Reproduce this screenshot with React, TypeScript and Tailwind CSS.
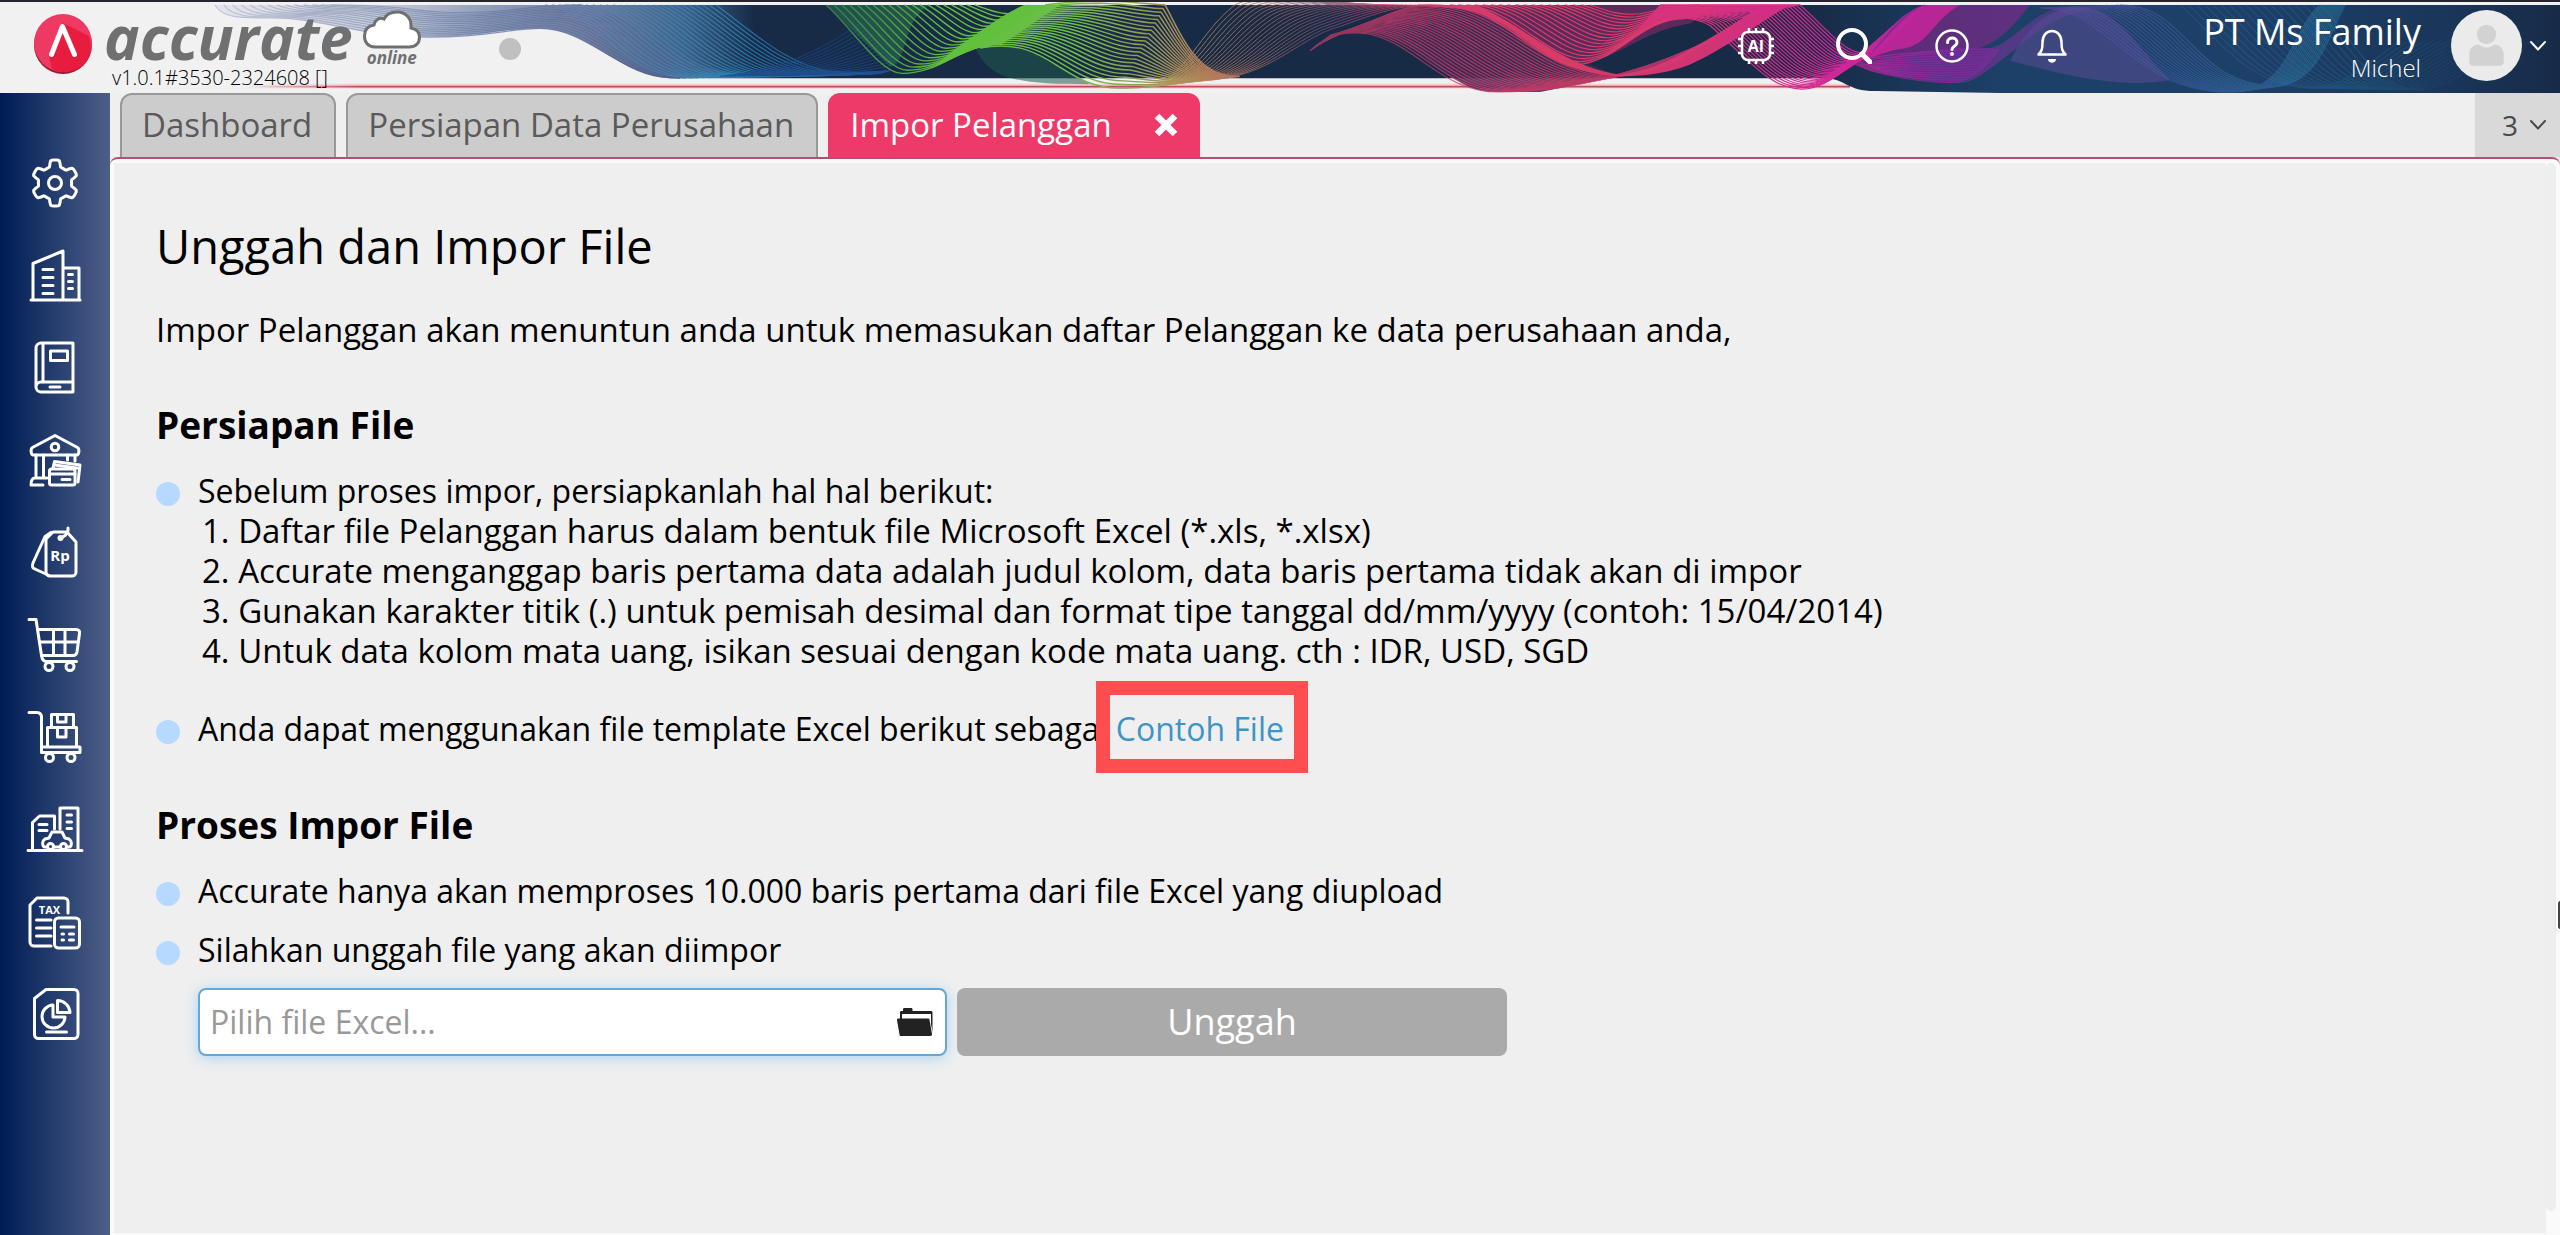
import { useState, type ReactNode } from "react";

type Curve = number[];

interface RibbonProps {
    from: Curve;
    to: Curve;
    lines: number;
    stroke: string;
    width?: number;
    opacity?: number;
}

// a curve is: x y (start), then groups of six numbers for each cubic segment
function toPath(c: Curve) {
    let d = `M${c[0]} ${c[1]}`;
    for (let i = 2; i < c.length; i += 6) {
        d += `C${c.slice(i, i + 6).join(" ")}`;
    }
    return d;
}

function Ribbon({ from, to, lines, stroke, width = 1.2, opacity = 1 }: RibbonProps) {
    return (
        <g fill="none" stroke={stroke} strokeWidth={width} opacity={opacity}>
            {Array.from({ length: lines }, (_, i) => {
                const t = i / (lines - 1);
                return <path key={i} d={toPath(from.map((v, k) => v + (to[k] - v) * t))} />;
            })}
        </g>
    );
}

function Banner() {
    return (
        <svg
            className="absolute inset-0 h-full w-full"
            viewBox="0 0 2560 93"
            preserveAspectRatio="none"
            aria-hidden="true"
        >
            <defs>
                <linearGradient id="base" gradientUnits="userSpaceOnUse" x1="215" y1="0" x2="2560" y2="0">
                    <stop offset="0" stopColor="#e4e5ec" />
                    <stop offset="0.07" stopColor="#c9ccdb" />
                    <stop offset="0.12" stopColor="#8b9ab8" />
                    <stop offset="0.16" stopColor="#6f7d9f" />
                    <stop offset="0.2" stopColor="#3f638c" />
                    <stop offset="0.23" stopColor="#172b47" />
                    <stop offset="0.68" stopColor="#172b47" />
                    <stop offset="0.76" stopColor="#1c4068" />
                    <stop offset="0.86" stopColor="#1d4069" />
                    <stop offset="0.95" stopColor="#1a365a" />
                    <stop offset="1" stopColor="#172b47" />
                </linearGradient>
                <linearGradient id="rule" gradientUnits="userSpaceOnUse" x1="245" y1="0" x2="360" y2="0">
                    <stop offset="0" stopColor="#c14c5c" stopOpacity="0" />
                    <stop offset="1" stopColor="#c14c5c" />
                </linearGradient>
                <linearGradient id="halo" gradientUnits="userSpaceOnUse" x1="245" y1="0" x2="360" y2="0">
                    <stop offset="0" stopColor="#fbc9cf" stopOpacity="0" />
                    <stop offset="1" stopColor="#fbc9cf" />
                </linearGradient>
                <linearGradient id="haze" gradientUnits="userSpaceOnUse" x1="220" y1="0" x2="660" y2="0">
                    <stop offset="0" stopColor="#b9bfd2" />
                    <stop offset="0.6" stopColor="#6a7da6" />
                    <stop offset="1" stopColor="#56618f" />
                </linearGradient>
                <linearGradient id="azure" gradientUnits="userSpaceOnUse" x1="560" y1="0" x2="900" y2="0">
                    <stop offset="0" stopColor="#6c84a8" />
                    <stop offset="0.5" stopColor="#2a86b8" />
                    <stop offset="1" stopColor="#1c4c9c" />
                </linearGradient>
                <linearGradient id="lime" gradientUnits="userSpaceOnUse" x1="820" y1="0" x2="1240" y2="0">
                    <stop offset="0" stopColor="#2f7a50" />
                    <stop offset="0.3" stopColor="#62c03c" />
                    <stop offset="0.6" stopColor="#6fbe4c" />
                    <stop offset="0.85" stopColor="#a58a5a" />
                    <stop offset="1" stopColor="#c2665a" />
                </linearGradient>
                <linearGradient id="amber" gradientUnits="userSpaceOnUse" x1="1160" y1="0" x2="1400" y2="0">
                    <stop offset="0" stopColor="#b5a05a" />
                    <stop offset="0.35" stopColor="#b0705c" />
                    <stop offset="0.7" stopColor="#7a4c66" />
                    <stop offset="1" stopColor="#c83d68" />
                </linearGradient>
                <linearGradient id="rose" gradientUnits="userSpaceOnUse" x1="1300" y1="0" x2="1760" y2="0">
                    <stop offset="0" stopColor="#b33a62" />
                    <stop offset="0.35" stopColor="#d83a6c" />
                    <stop offset="0.6" stopColor="#de3b66" />
                    <stop offset="1" stopColor="#d8327c" />
                </linearGradient>
                <linearGradient id="magenta" gradientUnits="userSpaceOnUse" x1="1700" y1="0" x2="2060" y2="0">
                    <stop offset="0" stopColor="#d8327c" />
                    <stop offset="0.4" stopColor="#d3259a" />
                    <stop offset="0.7" stopColor="#8a2a9c" />
                    <stop offset="1" stopColor="#54408f" />
                </linearGradient>
                <linearGradient id="violet" gradientUnits="userSpaceOnUse" x1="1980" y1="0" x2="2480" y2="0">
                    <stop offset="0" stopColor="#7a3f9c" />
                    <stop offset="0.4" stopColor="#3c62a4" />
                    <stop offset="0.75" stopColor="#26789a" />
                    <stop offset="1" stopColor="#1c4068" />
                </linearGradient>
            </defs>

            <path d="M245 86H1850" stroke="url(#halo)" strokeWidth="5" />
            <path d="M245 86.5H1850" stroke="url(#rule)" strokeWidth="2" />

            <path
                fill="url(#base)"
                d="M215 3C225 22 260 14 290 17C340 22 370 36 430 36C480 36 500 27 540 27C590 27 620 78 672 78H1820C1845 76 1845 91 1875 91L2000 93H2560V3Z"
            />

            {/* left haze */}
            <Ribbon
                from={[215, 3, 225, 22, 260, 14, 290, 17, 340, 22, 370, 36, 430, 36, 490, 36, 510, 27, 540, 27, 590, 27, 620, 78, 680, 78]}
                to={[330, 3, 360, 3, 380, 4, 400, 6, 430, 10, 450, 12, 490, 10, 520, 8, 540, 3, 580, 3, 640, 10, 660, 74, 760, 76]}
                lines={14}
                stroke="url(#haze)"
                opacity={0.8}
            />
            <Ribbon
                from={[545, 3, 600, 10, 620, 78, 690, 77, 760, 77, 820, 76, 880, 73]}
                to={[716, 3, 750, 28, 790, 68, 835, 71, 850, 72, 870, 73, 890, 70]}
                lines={26}
                stroke="url(#azure)"
                opacity={0.85}
            />
            <Ribbon
                from={[720, 76, 780, 70, 820, 50, 860, 22]}
                to={[780, 75, 830, 74, 870, 72, 900, 62]}
                lines={14}
                stroke="#1d4784"
                width={1}
                opacity={0.8}
            />

            {/* green */}
            <path fill="#2f7a50" opacity="0.5" d="M826 3L890 66C910 60 900 20 930 3Z" />
            <Ribbon
                from={[826, 3, 850, 24, 880, 73, 902, 73, 940, 73, 960, 45, 990, 45]}
                to={[975, 3, 990, 9, 1000, 12, 1008, 12, 1015, 12, 1022, 8, 1028, 3]}
                lines={20}
                stroke="url(#lime)"
                width={1.4}
            />
            <path
                fill="#62c03c"
                d="M950 52C975 34 1000 14 1024 3H1060C1040 16 1020 32 1000 44C985 42 965 52 935 66Z"
            />
            <path fill="#1f5a4a" opacity="0.55" d="M976 48C990 80 1020 84 1090 84C1060 66 1030 44 995 45Z" />
            <Ribbon
                from={[980, 47, 1050, 34, 1060, 88, 1120, 88, 1150, 88, 1170, 84, 1200, 80]}
                to={[1045, 3, 1110, -6, 1145, 3, 1165, 3, 1180, 30, 1195, 78, 1240, 76]}
                lines={24}
                stroke="url(#lime)"
                width={1.5}
            />

            {/* amber */}
            <Ribbon
                from={[1150, 87, 1185, 78, 1200, 30, 1235, 3, 1250, -6, 1300, -8, 1330, 3]}
                to={[1205, 80, 1270, 78, 1300, 35, 1340, 25, 1370, 14, 1390, 6, 1420, 3]}
                lines={22}
                stroke="url(#amber)"
                width={1}
                opacity={0.8}
            />

            {/* rose */}
            <path fill="#3a2c54" opacity="0.9" d="M1370 30C1400 10 1440 3 1480 3L1580 60L1620 76L1540 92H1490C1450 90 1420 40 1370 30Z" />
            <path fill="#5a2a5a" d="M1470 3H1720L1690 22C1640 30 1620 58 1578 64Z" />
            <Ribbon
                from={[1310, 50, 1330, 30, 1350, 30, 1370, 33, 1420, 45, 1440, 92, 1500, 92, 1560, 92, 1590, 80, 1640, 72]}
                to={[1330, 34, 1380, 20, 1390, 8, 1420, 3, 1500, -4, 1540, 70, 1610, 75, 1650, 76, 1680, 60, 1720, 34]}
                lines={26}
                stroke="url(#rose)"
                opacity={0.75}
            />
            <Ribbon
                from={[1450, 3, 1500, 6, 1540, 66, 1578, 64, 1620, 60, 1640, 17, 1685, 17]}
                to={[1590, 3, 1610, 10, 1620, 14, 1640, 12, 1660, 8, 1680, 3, 1700, 3]}
                lines={18}
                stroke="url(#rose)"
            />
            <path
                fill="url(#rose)"
                opacity="0.95"
                d="M1400 3H1475C1520 20 1560 66 1620 74C1660 70 1690 48 1722 30C1740 18 1755 8 1765 3H1790C1760 20 1730 45 1690 64C1650 80 1600 80 1560 62C1520 40 1500 10 1450 6Z"
            />
            <Ribbon
                from={[1640, 26, 1660, 14, 1690, 12, 1710, 24, 1750, 60, 1770, 89, 1802, 89, 1830, 89, 1850, 60, 1880, 50]}
                to={[1660, 3, 1720, 3, 1780, 3, 1800, 3, 1830, 30, 1850, 60, 1870, 50, 1890, 30, 1900, 12, 1925, 3]}
                lines={28}
                stroke="url(#magenta)"
            />

            {/* magenta */}
            <path fill="#7a2a88" opacity="0.7" d="M1865 60C1890 30 1900 10 1930 3H2030C2010 30 1990 50 1960 50Z" />
            <path fill="#c8259a" opacity="0.85" d="M1862 62C1890 36 1900 15 1925 3H1960C1930 20 1930 45 1900 48C1890 50 1875 54 1862 62Z" />
            <path fill="#7a2a9c" opacity="0.75" d="M1865 64C1900 50 1960 44 2000 48C1985 70 1970 83 1950 83C1915 80 1885 76 1865 64Z" />
            <Ribbon
                from={[1850, 62, 1890, 50, 1960, 50, 1990, 48, 2020, 40, 2030, 6, 2075, 5]}
                to={[1870, 70, 1920, 84, 1960, 84, 1970, 80, 2010, 60, 2040, 12, 2090, 8]}
                lines={14}
                stroke="url(#magenta)"
                opacity={0.7}
            />

            {/* violet and teal */}
            <path fill="#5b4a94" opacity="0.55" d="M2010 60C2030 20 2050 5 2085 6C2120 10 2140 50 2170 80C2110 90 2050 70 2010 60Z" />
            <Ribbon
                from={[2040, 6, 2110, 6, 2130, 92, 2230, 92, 2290, 92, 2290, 30, 2320, 3]}
                to={[2120, 3, 2190, 3, 2190, 86, 2280, 86, 2320, 80, 2330, 30, 2345, 3]}
                lines={18}
                stroke="url(#violet)"
                opacity={0.6}
            />
            <Ribbon
                from={[2180, 3, 2220, 40, 2250, 86, 2310, 88, 2350, 86, 2370, 60, 2400, 40]}
                to={[2320, 3, 2350, 30, 2370, 88, 2420, 90, 2460, 86, 2480, 50, 2540, 40]}
                lines={18}
                stroke="url(#violet)"
                opacity={0.35}
            />
        </svg>
    );
}

function gearPath() {
    const pts = Array.from({ length: 96 }, (_, i) => {
        const a = (i / 96) * Math.PI * 2;
        const wave = Math.max(-1, Math.min(1, 1.7 * Math.cos(6 * a)));
        const r = 19.8 + 3.2 * Math.sin((wave * Math.PI) / 2);
        return `${(26 + r * Math.sin(a)).toFixed(2)} ${(26 - r * Math.cos(a)).toFixed(2)}`;
    });
    return `M${pts.join("L")}Z`;
}

const menu: { label: string; icon: ReactNode }[] = [
    {
        label: "Pengaturan",
        icon: (
            <>
                <path d={gearPath()} />
                <circle cx="26" cy="26" r="6.5" />
            </>
        ),
    },
    {
        label: "Perusahaan",
        icon: (
            <>
                <path d="M2 51h49M4 51V14.500L34 2v49M34 19h16v32" />
                <path d="M14 20.500h10M14 28.500h10M14 36.500h10M14 44.500h10M39.500 25.500h4M39.500 32.500h4M39.500 39.500h4" />
            </>
        ),
    },
    {
        label: "Buku Besar",
        icon: (
            <>
                <path d="M44 2H12a5 5 0 0 0-5 5v39a5 5 0 0 0 5 5h32zM14 2v39M44 41H12a5 5 0 0 0-5 5" />
                <path d="M21.500 10h17v9.500h-17zM21 46h10" />
            </>
        ),
    },
    {
        label: "Kas dan Bank",
        icon: (
            <>
                <path d="M26 2.500L3.500 14.500c-2 1-2 7.500 1 7.500h43c3 0 3-6.500 1-7.500z" />
                <circle cx="26" cy="14" r="3.800" />
                <path d="M7 22v21M14.500 22v21M38.500 22v5M46 22v6M18 45H6c-3 0-4 3-4 7h12" />
                <path d="M24 35l1.500-6.500L51 32l-2 17" />
                <rect x="20.500" y="36" width="25.500" height="16" rx="2" />
                <path d="M20.500 41h25.500M33 46.500h8M26 32l22 3" />
            </>
        ),
    },
    {
        label: "Penjualan",
        icon: (
            <>
                <path d="M24 7h14l9 10v30a4 4 0 0 1-4 4H21a4 4 0 0 1-4-4V14z" />
                <path d="M22 7.500l-6 4L4 38c-1 3-1 5 2 6l14 6.500" />
                <path d="M39 3v2c0 5-4 6-7 8" />
                <circle cx="31.500" cy="13" r="1.500" />
                <text
                    x="31"
                    y="36"
                    fontSize="15"
                    fontWeight="700"
                    textAnchor="middle"
                    fill="white"
                    stroke="none"
                    fontFamily="'Open Sans', sans-serif"
                >
                    Rp
                </text>
            </>
        ),
    },
    {
        label: "Pembelian",
        icon: (
            <>
                <path d="M0 2.500h7l5.500 36c.5 4 2 6 5 6h30" />
                <path d="M9 12.500h38c3 0 4 2 3.500 4L48 35c-.5 3-2 3.500-4 3.500H13M10.500 25h39M24.500 12.500v26M36 12.500v26" />
                <circle cx="20" cy="49.500" r="4" />
                <circle cx="41" cy="49.500" r="4" />
            </>
        ),
    },
    {
        label: "Persediaan",
        icon: (
            <>
                <path d="M0 3.500h8c3 0 4.500 2 4.500 5v35h38.500v-5.500H12.500" />
                <path d="M22.500 18.500v-13h22v13M28.500 5.500v7.500h8.500V5.500M18.500 37.500v-19h29v19M28.500 18.500V28h8.500v-9.500" />
                <circle cx="20.500" cy="48.500" r="4" />
                <circle cx="42" cy="48.500" r="4" />
            </>
        ),
    },
    {
        label: "Aset Tetap",
        icon: (
            <>
                <path d="M-1 49.500h54M3.500 49.500v-28l7-6.500H25.500v13M31 28V7h18v42.500" />
                <path d="M10 23.500h8M10 29.500h8M38 14h4.500M38 21h4.500M38 27.500h4.500" />
                <path d="M18 46h-3c-2-2-2-6 1-8l4-1 3-6h10l3 6 4 1c3 2 3 6 1 8h-3M25 46h6" />
                <circle cx="21.500" cy="45.500" r="3" />
                <circle cx="34.500" cy="45.500" r="3" />
            </>
        ),
    },
    {
        label: "Pajak",
        icon: (
            <>
                <path d="M39 20V9a4 4 0 0 0-4-4H8l-7 7v37a4 4 0 0 0 4 4h17" />
                <path d="M7.500 27H22M7.500 35H22M7.500 43H22" />
                <rect x="25.500" y="25" width="25" height="30" rx="4" />
                <path d="M32 34h13M33 41h1.500M40.500 41h4M33 47h1.500M40.500 47h4" />
                <text
                    x="20.500"
                    y="21"
                    fontSize="11"
                    fontWeight="700"
                    textAnchor="middle"
                    fill="white"
                    stroke="none"
                    fontFamily="'Open Sans', sans-serif"
                >
                    TAX
                </text>
            </>
        ),
    },
    {
        label: "Laporan",
        icon: (
            <>
                <path d="M17 4.500h28a4 4 0 0 1 4 4v41a4 4 0 0 1-4 4H9.500a4 4 0 0 1-4-4V13.500z" />
                <path d="M24 20a11.500 11.500 0 1 0 12 12H24z" />
                <path d="M28.500 15.500v12h12.500a12.500 12.500 0 0 0-12.500-12zM17.500 47h20" />
            </>
        ),
    },
];

function Sidebar() {
    return (
        <nav
            aria-label="Menu utama"
            className="flex w-[110px] shrink-0 flex-col bg-linear-to-r from-[#001b54] to-[#4d5f88] pt-11"
        >
            {menu.map((item) => (
                <button
                    key={item.label}
                    aria-label={item.label}
                    className="flex h-[92px] w-full items-center justify-center"
                >
                    <svg
                        className="h-[52px] w-[52px] overflow-visible"
                        viewBox="0 0 52 52"
                        fill="none"
                        stroke="white"
                        strokeWidth="3"
                        strokeLinecap="round"
                        strokeLinejoin="round"
                    >
                        {item.icon}
                    </svg>
                </button>
            ))}
        </nav>
    );
}

function Logo() {
    return (
        <div className="flex flex-col pt-2 pl-[34px]">
            <div className="flex h-[60px]">
                <svg className="mt-1 h-[60px] w-[58px] shrink-0" viewBox="0 0 58 60" aria-hidden="true">
                    <ellipse cx="29" cy="31" rx="29" ry="29" fill="#9c1c34" />
                    <ellipse cx="29" cy="29" rx="29" ry="29" fill="#ee3a63" />
                    <path d="M29 9L55 22C62 42 50 58 29 58C26 58 22 57 18 55L15 42Z" fill="#e81c3e" />
                    <path
                        d="M17.500 40.500L28.500 12.500L40.500 40.500"
                        fill="none"
                        stroke="white"
                        strokeWidth="5"
                        strokeLinecap="round"
                        strokeLinejoin="round"
                    />
                </svg>
                <span className="ml-3 text-[60px] leading-[54px] font-bold text-[#6f7072] italic">
                    accurate
                </span>
                <div className="ml-2.5 flex flex-col items-center">
                    <svg className="h-10 w-[58px]" viewBox="0 0 58 40" aria-hidden="true">
                        <path
                            d="M12 37C5 37 1.500 32 1.500 26C1.500 20 5 16 11 15C12 10 16 7 21 9C24 3 30 1.500 36 2C43 3 48 8 48 15V18C53 19 56.500 22 56.500 27C56.500 33 53 37 46 37Z"
                            fill="white"
                            stroke="#6f7072"
                            strokeWidth="3"
                        />
                    </svg>
                    <span className="text-[17px] leading-4 font-bold text-[#6f7072] italic">online</span>
                </div>
            </div>
            <span className="pl-[78px] text-[20px] leading-4 font-light text-black">
                v1.0.1#3530-2324608 []
            </span>
        </div>
    );
}

function Chevron() {
    return (
        <svg className="h-[10px] w-4" viewBox="0 0 16 10" fill="none" stroke="currentColor" strokeWidth="2">
            <path d="M1 1l7 7.500L15 1" strokeLinecap="round" strokeLinejoin="round" />
        </svg>
    );
}

function Header() {
    return (
        <header className="relative h-[93px] border-t-2 border-[#26242c] bg-[#f1f1f1]">
            <Banner />
            <div className="relative flex h-full items-start justify-between">
                <div className="flex items-start">
                    <Logo />
                    <span className="mt-[36px] ml-[78px] h-[22px] w-[22px] rounded-full bg-[#c0c0c0]" />
                </div>

                <div className="flex items-start pr-3.5 text-white">
                    <div className="flex pt-[26px]">
                        <button aria-label="Asisten AI" className="mr-[62px]">
                            <svg className="h-9 w-9" viewBox="0 0 36 36" fill="none" stroke="white" strokeWidth="2.500">
                                <rect x="4" y="4" width="28" height="28" rx="6" />
                                <path
                                    d="M11 4V0M18 4V0M25 4V0M11 36v-4M18 36v-4M25 36v-4M4 11H0M4 18H0M4 25H0M36 11h-4M36 18h-4M36 25h-4"
                                />
                                <text
                                    x="18"
                                    y="24"
                                    fontSize="16"
                                    fontWeight="700"
                                    textAnchor="middle"
                                    fill="white"
                                    stroke="none"
                                    fontFamily="'Open Sans', sans-serif"
                                >
                                    AI
                                </text>
                            </svg>
                        </button>
                        <button aria-label="Cari" className="mr-[62px]">
                            <svg className="h-9 w-9" viewBox="0 0 36 36" fill="none" stroke="white" strokeWidth="4">
                                <circle cx="16" cy="16" r="14" />
                                <path d="M26 26l8 8" strokeWidth="5" strokeLinecap="round" />
                            </svg>
                        </button>
                        <button aria-label="Bantuan" className="mr-[64px]">
                            <svg className="h-9 w-9" viewBox="0 0 36 36" fill="none" stroke="white" strokeWidth="2.500">
                                <circle cx="18" cy="18" r="15.500" />
                                <path
                                    d="M13.500 14.500c0-6 9.500-6 9.500 0 0 4-5 3.500-5 7"
                                    strokeWidth="3"
                                    strokeLinecap="round"
                                />
                                <circle cx="18" cy="26" r="2" fill="white" stroke="none" />
                            </svg>
                        </button>
                        <button aria-label="Notifikasi">
                            <svg className="h-9 w-9" viewBox="0 0 36 36" fill="none" stroke="white" strokeWidth="2.500">
                                <path
                                    d="M4.500 26.500c3-3 4-5 4-12 0-7 4-11.500 9.500-11.500s9.500 4.500 9.500 11.500c0 7 1 9 4 12z"
                                    strokeLinejoin="round"
                                />
                                <path d="M14 31h8c0 5-8 5-8 0z" fill="white" stroke="none" />
                            </svg>
                        </button>
                    </div>

                    <div className="ml-[133px] flex flex-col items-end pt-1.5">
                        <span className="text-[36px] leading-[48px]">PT Ms Family</span>
                        <span className="text-[24px] leading-6 font-light">Michel</span>
                    </div>
                    <button aria-label="Akun" className="ml-[30px] flex items-center gap-2 pt-2">
                        <svg className="h-[71px] w-[71px]" viewBox="0 0 70 70" aria-hidden="true">
                            <circle cx="35" cy="35" r="35" fill="#ebebeb" />
                            <circle cx="35" cy="24" r="9.500" fill="#d2d2d2" />
                            <path
                                d="M18 51V45C18 38 22 34 27 34C32 38 38 38 43 34C48 34 52 38 52 45V51C52 53 51 55 48 55H22C19 55 18 53 18 51Z"
                                fill="#d2d2d2"
                            />
                        </svg>
                        <Chevron />
                    </button>
                </div>
            </div>
        </header>
    );
}

function TabBar() {
    return (
        <div className="flex h-16 justify-between bg-[#efefef]">
            <div role="tablist" className="flex gap-[10px] pl-[10px] text-[33px] text-[#5a5a5a]">
                <button
                    role="tab"
                    aria-selected="false"
                    className="rounded-t-xl border-2 border-b-0 border-[#999] bg-[#ccc] pr-[22px] pb-0.5 pl-5"
                >
                    Dashboard
                </button>
                <button
                    role="tab"
                    aria-selected="false"
                    className="rounded-t-xl border-2 border-b-0 border-[#999] bg-[#ccc] pr-[22px] pb-0.5 pl-5"
                >
                    Persiapan Data Perusahaan
                </button>
                <div className="flex items-center gap-[42px] rounded-t-xl bg-[#ee3a68] pr-[22px] pl-[22px] text-white">
                    <button role="tab" aria-selected="true">
                        Impor Pelanggan
                    </button>
                    <button aria-label="Tutup tab">
                        <svg className="h-6 w-6" viewBox="0 0 24 24" stroke="white" strokeWidth="6.500">
                            <path d="M3 3l18 18M21 3L3 21" />
                        </svg>
                    </button>
                </div>
            </div>
            <button
                aria-label="Daftar tab"
                className="flex w-[85px] items-center justify-end gap-3 bg-[#d9d9d9] pr-3.5 text-[28px] text-[#4a4a4a]"
            >
                3
                <Chevron />
            </button>
        </div>
    );
}

function Bullet({ children }: { children: ReactNode }) {
    return (
        <div className="flex gap-[18px]">
            <span className="mt-[11px] h-6 w-6 shrink-0 rounded-full bg-[#b5d9ff]" />
            <div>{children}</div>
        </div>
    );
}

const steps = [
    "Daftar file Pelanggan harus dalam bentuk file Microsoft Excel (*.xls, *.xlsx)",
    "Accurate menganggap baris pertama data adalah judul kolom, data baris pertama tidak akan di impor",
    "Gunakan karakter titik (.) untuk pemisah desimal dan format tipe tanggal dd/mm/yyyy (contoh: 15/04/2014)",
    "Untuk data kolom mata uang, isikan sesuai dengan kode mata uang. cth : IDR, USD, SGD",
];

function ImportPage() {
    const [file, setFile] = useState("");

    return (
        <main className="px-[42px] pt-[55px] text-[32px] leading-10 text-black">
            <h1 className="text-[47px] leading-[56px]">Unggah dan Impor File</h1>
            <p className="mt-9 text-[33px]">
                Impor Pelanggan akan menuntun anda untuk memasukan daftar Pelanggan ke data perusahaan anda,
            </p>

            <h2 className="mt-[51px] text-[37px] leading-[48px] font-bold">Persiapan File</h2>
            <div className="mt-[22px] flex flex-col gap-[38px]">
                <Bullet>
                    <p>Sebelum proses impor, persiapkanlah hal hal berikut:</p>
                    <ol className="list-inside list-decimal pl-1 text-[33px]">
                        {steps.map((step) => (
                            <li key={step}>{step}</li>
                        ))}
                    </ol>
                </Bullet>
                <Bullet>
                    <p className="flex">
                        Anda dapat menggunakan file template Excel berikut sebagai
                        <span className="relative ml-2">
                            <span className="absolute -top-7 -right-6 -bottom-6 -left-5 border-[14px] border-[#ff4d50] bg-[#efefef]" />
                            <a href="#contoh" className="relative text-[#3f94c6]">
                                Contoh File
                            </a>
                        </span>
                    </p>
                </Bullet>
            </div>

            <h2 className="mt-[52px] text-[37px] leading-[48px] font-bold">Proses Impor File</h2>
            <div className="mt-[22px] flex flex-col gap-[19px]">
                <Bullet>
                    <p>Accurate hanya akan memproses 10.000 baris pertama dari file Excel yang diupload</p>
                </Bullet>
                <Bullet>
                    <label htmlFor="file">Silahkan unggah file yang akan diimpor</label>
                </Bullet>
            </div>

            <form className="mt-[18px] flex gap-[10px] pl-[42px]" onSubmit={(e) => e.preventDefault()}>
                <div className="flex h-[68px] w-[749px] items-center rounded-lg border-2 border-[#66a6d8] bg-white pr-3 pl-2.5 shadow-[0_2px_14px_#a9d3f5]">
                    <input
                        id="file"
                        type="text"
                        value={file}
                        onChange={(e) => setFile(e.target.value)}
                        placeholder="Pilih file Excel..."
                        className="min-w-0 flex-1 bg-transparent outline-none placeholder:text-[#999]"
                    />
                    <button type="button" aria-label="Telusuri file">
                        <svg className="h-7 w-9" viewBox="0 0 36 28" fill="#222">
                            <path d="M3 12V4.500C3 3.500 3.500 3 4.500 3H6V1.500C6 .5 6.500 0 7.500 0H14C15 0 15.500 .5 15.500 1.500V3H34C35 3 35.500 3.500 35.500 4.500V24L34 16V6H5V12Z" />
                            <path d="M0 12C0 11 .5 10.500 1.500 10.500H31C32 10.500 32.500 11 32.500 12L35 26C35 27 34.500 28 33.500 28H4C3 28 2.500 27.500 2.500 26.500Z" />
                        </svg>
                    </button>
                </div>
                <button type="submit" className="h-[68px] w-[550px] rounded-lg bg-[#aaa] text-[36px] text-white">
                    Unggah
                </button>
            </form>
        </main>
    );
}

export default function App() {
    return (
        <div className="flex min-h-screen flex-col bg-[#efefef] font-['Open_Sans',sans-serif]">
            <Header />
            <div className="flex flex-1">
                <Sidebar />
                <div className="flex min-w-0 flex-1 flex-col">
                    <TabBar />
                    <div className="relative flex-1 rounded-tl-lg rounded-tr-lg border-t-2 border-[#b4506f] bg-[#fafafa] pt-1 pr-3.5 pb-0.5 pl-1">
                        <div className="h-full bg-[#efefef]">
                            <ImportPage />
                        </div>
                        <div className="absolute top-1 right-1 bottom-6 w-[10px] rounded-full bg-[#eee]" />
                        <div className="absolute right-0 bottom-[304px] h-8 w-1 rounded-l border-2 border-r-0 border-white bg-[#444] shadow" />
                    </div>
                </div>
            </div>
        </div>
    );
}
